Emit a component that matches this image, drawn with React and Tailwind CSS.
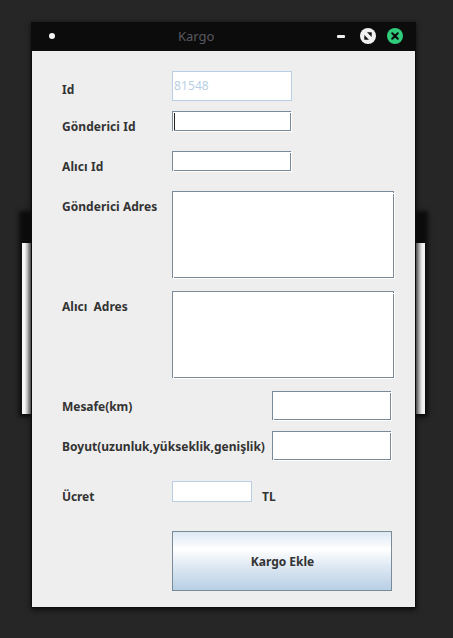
import React from "react";

function Field({ className, focused = false, area = false }) {
  return (
    <div
      className={`relative shrink-0 border border-[#7a8a99] bg-white shadow-[1px_1px_0_#ffffff] ${className}`}
    >
      <span className={`absolute -right-px h-px w-px bg-white ${area ? "top-px" : "top-0"}`} />
      <span className="absolute -bottom-px left-0 h-px w-px bg-white" />
      {focused && <span className="absolute left-px top-px h-[17px] w-px bg-[#222222]" />}
    </div>
  );
}

function Label({ children, className }) {
  return <label className={`shrink-0 whitespace-pre leading-[16px] ${className}`}>{children}</label>;
}

function TitleBar() {
  return (
    <header className="-mx-px flex h-[29px] items-center bg-[#0c0c0c] pl-[18px] pr-[13px]">
      <span className="mb-px h-[6px] w-[6px] rounded-full bg-[#f4f4f4]" />
      <h1 className="mb-[2px] ml-[123px] font-['Noto_Sans',sans-serif] text-[13px] font-normal leading-[18px] text-[#585860]">
        Kargo
      </h1>
      <div className="mb-px ml-auto flex items-center">
        <span className="mr-[15px] h-[3px] w-[8px] rounded-[1px] bg-[#efefef]" />
        <svg className="mr-[11px]" width="16" height="16" viewBox="0 0 16 16">
          <circle cx="8" cy="8" r="8" fill="#f1f1f1" />
          <path d="M7 4.3h4.7V9zM4.3 7v4.7H9z" fill="#141414" />
        </svg>
        <svg width="16" height="16" viewBox="0 0 16 16">
          <circle cx="8" cy="8" r="8" fill="#2ecc7b" />
          <path d="M5.2 5.2l5.6 5.6M10.8 5.2l-5.6 5.6" stroke="#0c0c0c" strokeWidth="2" strokeLinecap="round" />
        </svg>
      </div>
    </header>
  );
}

export default function App() {
  return (
    <div className="relative h-[638px] w-[453px] overflow-hidden bg-[#262626] font-['Noto_Sans',sans-serif] text-[12px] font-bold text-[#333333]">
      <div className="absolute left-[22px] top-[214px] h-[200px] w-[403px] bg-[#0c0c0c] pt-[29px] shadow-[0_0_4px_3px_#0c0c0c]">
        <div className="flex h-[171px] justify-between bg-[#eeeeee]">
          <div className="w-[9px] bg-linear-to-r from-[#f6f6f6] from-30% to-[#888888]" />
          <div className="w-[9px] bg-linear-to-l from-[#f2f2f2] from-30% to-[#888888]" />
        </div>
      </div>

      <main className="absolute left-[32px] top-[22px] w-[383px] bg-[#eeeeee] shadow-[1px_0_0_#0c0c0c,-1px_0_0_#0c0c0c,0_1px_0_#0c0c0c,0_2px_5px_1px_#0c0c0c]">
        <TitleBar />
        <form className="flex h-[556px] flex-col pl-[30px] pt-[20px]">
          <div className="flex h-[40px] items-start">
            <Label className="mt-[11px] w-[110px]">Id</Label>
            <div className="flex h-[30px] w-[120px] items-center border border-[#b8cfe5] bg-white pl-px font-normal tracking-[0.1px] text-[#b8cfe5]">
              81548
            </div>
          </div>
          <div className="flex h-[40px] items-start">
            <Label className="mt-[8px] w-[110px] tracking-[0.06px]">Gönderici Id</Label>
            <Field className="h-[20px] w-[119px]" focused />
          </div>
          <div className="flex h-[40px] items-start">
            <Label className="mt-[8px] w-[110px] tracking-[0.1px]">Alıcı Id</Label>
            <Field className="h-[20px] w-[119px]" />
          </div>
          <div className="flex h-[100px] items-start">
            <Label className="mt-[8px] w-[110px] tracking-[0.03px]">Gönderici Adres</Label>
            <Field className="h-[87px] w-[222px]" area />
          </div>
          <div className="flex h-[100px] items-start">
            <Label className="mt-[8px] w-[110px]">{"Alıcı  Adres"}</Label>
            <Field className="h-[87px] w-[222px]" area />
          </div>
          <div className="flex h-[40px] items-start">
            <Label className="mt-[8px] w-[210px] tracking-[-0.05px]">Mesafe(km)</Label>
            <Field className="h-[29px] w-[119px]" />
          </div>
          <div className="flex h-[50px] items-start">
            <Label className="mt-[8px] w-[210px] tracking-[0.02px]">Boyut(uzunluk,yükseklik,genişlik)</Label>
            <Field className="h-[29px] w-[119px]" />
          </div>
          <div className="flex h-[50px] items-start">
            <Label className="mt-[8px] w-[110px] tracking-[-0.1px]">Ücret</Label>
            <div className="h-[21px] w-[80px] border border-[#b8cfe5] bg-white" />
            <Label className="ml-[10px] mt-[8px]">TL</Label>
          </div>
          <button
            type="button"
            className="ml-[110px] h-[60px] w-[220px] border border-[#7a8a99] bg-[linear-gradient(to_bottom,#dde8f3_0%,#ffffff_30%,#dde8f3_60%,#b8cfe5_100%)] pl-px pt-[2px] leading-[16px]"
          >
            Kargo Ekle
          </button>
        </form>
      </main>
    </div>
  );
}
